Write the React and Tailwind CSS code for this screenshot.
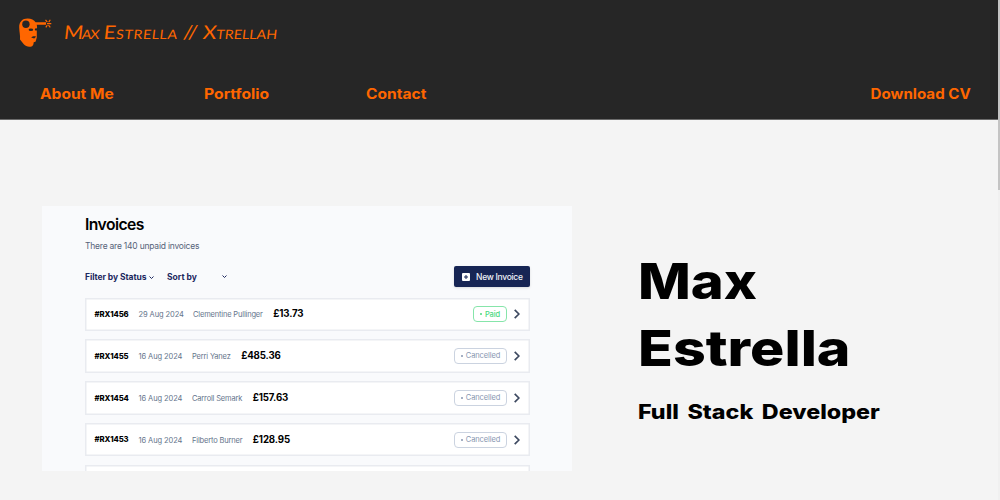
const invoices = [
  { id: "#RX1456", date: "29 Aug 2024", name: "Clementine Pullinger", total: "£13.73", status: "Paid" },
  { id: "#RX1455", date: "16 Aug 2024", name: "Perri Yanez", total: "£485.36", status: "Cancelled" },
  { id: "#RX1454", date: "16 Aug 2024", name: "Carroll Semark", total: "£157.63", status: "Cancelled" },
  { id: "#RX1453", date: "16 Aug 2024", name: "Filberto Burner", total: "£128.95", status: "Cancelled" },
];

function Logo() {
  return (
    <svg className="h-[30px] w-[34px] shrink-0" viewBox="0 0 34 30" fill="none">
      <path
        d="M1.200 9.500C1 4 4.300.6 9.600.6c3.700 0 6.500 1.500 8 3.700H28v2.500h-9.300c.5 1.700.5 3.700.1 6v6.700l-1.300 4.300-1.800.4c-.1 2-.6 3.200-1.600 4-2.800 1.300-6.300.5-8.300-1.900L2 21.500c.4-4-.7-7.500-.8-12Z"
        fill="#ff6600"
      />
      <circle cx="7.900" cy="6.200" r="3.700" fill="#262626" />
      <ellipse cx="12.900" cy="11.700" rx="2.300" ry="1.300" fill="#262626" />
      <ellipse cx="18.100" cy="11.400" rx="1.200" ry="1.200" fill="#262626" />
      <path d="M13.200 19.600c1.300-1.400 3.300-1.700 4.900-.9l-1.900 1.700Z" fill="#262626" />
      <path d="m27.500 1.800 1.800 2.400m3-2.400-1.600 2.500M29 5.700h4.300m-4 1.500-1.500 2.200m2.700-2.200 1.800 2.200" stroke="#ff6600" strokeWidth="1.200" />
    </svg>
  );
}

function Caret() {
  return (
    <svg className="h-[5px] w-[5px]" viewBox="0 0 5 5" fill="none" stroke="#1d285f">
      <path d="m.5 1.500 2 2 2-2" />
    </svg>
  );
}

function InvoiceRow({ invoice }) {
  const paid = invoice.status === "Paid";
  return (
    <li className="flex h-[33.500px] shrink-0 items-center bg-white pr-[10px] pl-[9.500px] whitespace-nowrap shadow-[inset_0_0_0_1.500px_#e9ebf0]">
      <span className="w-[44px] pt-px text-[7.700px] font-extrabold tracking-[-0.1px] text-black">{invoice.id}</span>
      <span className={`${paid ? "w-[54.500px]" : "w-[53.500px]"} pt-px text-[7.500px] tracking-[-0.08px] text-[#64748b]`}>{invoice.date}</span>
      <span className="pt-px text-[7.500px] tracking-[-0.17px] text-[#64748b]">{invoice.name}</span>
      <span className="ml-[10.500px] pt-px text-[9.700px] font-bold tracking-[-0.15px] text-black">{invoice.total}</span>
      <span
        className={`ml-auto flex h-4 items-center justify-center gap-[3px] rounded-[4px] border text-[7.500px] tracking-[-0.1px] ${
          paid ? "w-[34px] border-[#86e5aa] font-medium text-[#4bd980]" : "w-[53px] border-[#cbd3e0] text-[#8796b0]"
        }`}
      >
        <span className="h-[2px] w-[2px] rounded-full bg-current" />
        {invoice.status}
      </span>
      <svg className="ml-[7px] h-[10px] w-[6px]" viewBox="0 0 6 10" fill="none" stroke="#3d4960" strokeWidth="1.700">
        <path d="m.7.8 4.200 4.200L.7 9.200" />
      </svg>
    </li>
  );
}

function InvoicePreview() {
  return (
    <section className="flex h-[265px] w-[530px] shrink-0 flex-col overflow-hidden bg-[#f9fafc] pr-[42px] pl-[43px] font-['Inter',sans-serif]">
      <h2 className="mt-[9px] h-5 text-[15.700px] leading-5 font-semibold tracking-[-0.550px] text-black">Invoices</h2>
      <p className="mt-[5px] h-3 text-[8.500px] leading-3 tracking-[-0.220px] text-[#566379]">There are 140 unpaid invoices</p>
      <div className="mt-[14px] flex h-[21px] shrink-0 items-center text-[8.500px] font-bold text-[#1d285f]">
        <span className="flex w-[82px] items-center gap-[3px] pt-px tracking-[-0.06px]">Filter by Status <Caret /></span>
        <span className="w-[55px] pt-px">Sort by</span>
        <Caret />
        <button className="ml-auto flex h-[21px] w-[76px] items-center gap-[6px] rounded-[2px] bg-[#172554] pl-2 text-[8.500px] font-medium tracking-[-0.280px] whitespace-nowrap text-[#eef1f7] shadow-sm">
          <svg className="h-2 w-2 shrink-0" viewBox="0 0 8 8">
            <rect width="8" height="8" rx="1" fill="#fff" />
            <path d="M4 2v4M2 4h4" stroke="#172554" strokeWidth="1" />
          </svg>
          <span className="pt-px">New Invoice</span>
        </button>
      </div>
      <ul className="mt-[10.500px] flex flex-col gap-[8.300px]">
        {invoices.map((invoice) => (
          <InvoiceRow key={invoice.id} invoice={invoice} />
        ))}
        <li className="h-[33.500px] shrink-0 bg-white shadow-[inset_0_0_0_1.500px_#e9ebf0]" />
      </ul>
    </section>
  );
}

export default function App() {
  return (
    <div className="flex h-[500px] w-[1000px] overflow-hidden bg-[#f4f4f4]">
      <div className="flex w-[998px] flex-col">
        <header className="flex h-[120px] shrink-0 flex-col border-b border-[#6b6b6b] bg-[#262626] text-[#ff6600]">
          <div className="flex h-[65px] items-center pl-[18px]">
            <Logo />
            <h1 className="ml-[12px] origin-left -skew-x-6 scale-x-110 font-['Lato',sans-serif] text-[19px] whitespace-nowrap [font-variant-caps:small-caps]">
              <span className="tracking-[-1.200px]">Max</span> <span className="tracking-[0.500px]">Estrella</span> // Xtrellah
            </h1>
          </div>
          <nav className="flex h-[54px] items-center pt-[3px] pl-10 font-['Inter',sans-serif] text-[14px] font-bold whitespace-nowrap">
            <a className="w-[164px]"><span className="inline-block origin-left scale-x-[1.110]">About Me</span></a>
            <a className="w-[162px]"><span className="inline-block origin-left scale-x-[1.120]">Portfolio</span></a>
            <a><span className="inline-block origin-left scale-x-[1.110]">Contact</span></a>
            <a className="mr-[27px] ml-auto"><span className="inline-block origin-right scale-x-[1.080]">Download CV</span></a>
          </nav>
        </header>
        <main className="flex flex-1 items-start pt-[86px] pl-[42px]">
          <InvoicePreview />
          <div className="ml-[66px] pt-[42px] font-['Inter',sans-serif] font-extrabold text-black">
            <h2 className="text-[50px] leading-[66.500px]">
              <span className="block origin-left scale-x-[1.120]">Max</span>
              <span className="block origin-left scale-x-[1.145]">Estrella</span>
            </h2>
            <p className="mt-[17px] origin-left scale-x-[1.165] text-[20px] leading-7 [word-spacing:3px] whitespace-nowrap">Full Stack Developer</p>
          </div>
        </main>
      </div>
      <div className="w-[2px] bg-[#f0f0f0]">
        <div className="h-[190px] bg-[#c4c4c4]" />
      </div>
    </div>
  );
}
